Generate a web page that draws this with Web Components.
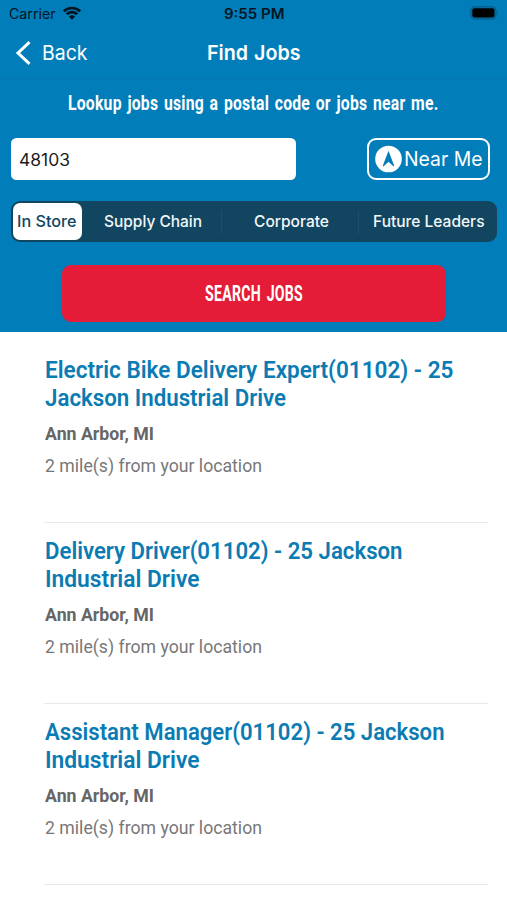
<!DOCTYPE html>
<html lang="en">
<head>
<meta charset="utf-8">
<title>Find Jobs</title>
<style>
html, body { margin: 0; background: #fff; }
body { width: 507px; height: 900px; overflow: hidden; }
</style>
</head>
<body>
<jobs-app></jobs-app>
<script>
const define = (name, html, ready) => {
  const t = document.createElement('template');
  t.innerHTML = html;
  customElements.define(name, class extends HTMLElement {
    constructor() {
      super();
      this.attachShadow({ mode: 'open' }).appendChild(t.content.cloneNode(true));
    }
    connectedCallback() { if (ready) ready.call(this); }
  });
};

/* One line of text, condensed or widened to the width given in "w". */
define('fit-line', `
<style>
:host { display: block; white-space: nowrap; flex: none; }
span { display: inline-block; transform-origin: 0 50%; }
</style><span><slot></slot></span>`, function () {
  const w = parseFloat(this.getAttribute('w'));
  this.style.width = w + 'px';
  const s = this.shadowRoot.querySelector('span');
  const natural = s.getBoundingClientRect().width;
  s.style.marginRight = (w - natural) + 'px';
  s.style.transform = 'scaleX(' + w / natural + ')';
});

define('status-bar', `
<style>
:host { display: flex; justify-content: space-between; height: 28px; padding: 0 8px 0 9px; color: #04151f; font-size: 13.8px; line-height: 28px; }
div { flex: 1; display: flex; align-items: center; }
.l { gap: 7px; } .r { justify-content: flex-end; }
b { font-weight: 600; }
svg { display: block; margin-top: -2px; }
</style>
<div class="l"><fit-line w="46.5">Carrier</fit-line>
<svg width="18" height="14" viewBox="0 0 18 14" fill="none" stroke="#04151f" stroke-width="2.7"><path d="M.9 5.3a11.6 11.6 0 0 1 16.2 0M3.8 8.3a7.5 7.5 0 0 1 10.4 0"/><path d="M9 13.7 6 10.6a4.3 4.3 0 0 1 6 0z" fill="#04151f" stroke="none"/></svg></div>
<b><fit-line w="60.5">9:55 PM</fit-line></b>
<div class="r"><svg width="29" height="14" viewBox="0 0 29 14"><rect x=".9" y=".9" width="25" height="12" rx="3.6" fill="none" stroke="#075b86" stroke-width="1.2"/><rect x="2.3" y="2.3" width="22.2" height="9.2" rx="2" fill="#000"/><path d="M27.2 4.8q1.8 2.2 0 4.4z" fill="#075b86"/></svg></div>`);

define('nav-bar', `
<style>
:host { display: grid; grid-template-columns: 1fr auto 1fr; align-items: center; box-sizing: border-box; height: 51px; padding: 0 15px .5px; border-bottom: 1px solid #0475ad; font-size: 20.4px; line-height: 26px; }
.back { display: flex; align-items: center; gap: 10px; }
svg { display: block; }
b { font-weight: 600; word-spacing: 1px; }
</style>
<div class="back"><svg width="17" height="24" viewBox="0 0 17 24" fill="none" stroke="#fff" stroke-width="3"><path d="M14.5 1.2 3 12l11.5 10.8"/></svg><fit-line w="45.5">Back</fit-line></div>
<b><fit-line w="93.5">Find Jobs</fit-line></b><i></i>`);

define('search-row', `
<style>
:host { display: flex; justify-content: space-between; height: 42px; padding: 11px 17px 0 11px; }
.field { display: flex; align-items: center; box-sizing: border-box; width: 284.5px; padding: 1px 0 0 7.8px; border-radius: 5.5px; background: #fff; color: #1c1c1e; font-size: 16.8px; line-height: 24px; }
.near { display: flex; align-items: center; gap: 2px; box-sizing: border-box; width: 123px; padding: 0 0 0 5.5px; border: 2.3px solid #fff; border-radius: 9px; font-size: 19.8px; line-height: 24px; }
svg { display: block; flex: none; }
</style>
<div class="field"><fit-line w="51">48103</fit-line></div>
<div class="near"><svg width="27" height="28" viewBox="0 0 27 28"><circle cx="13.5" cy="14" r="13.3" fill="#fff"/><path d="M13.5 5.8 7.8 20.8q.1.8.8.5l4.9-4.5 4.9 4.5q.7.3.8-.5z" fill="#017db9"/></svg><fit-line w="78.5">Near Me</fit-line></div>`);

define('job-tabs', `
<style>
:host { display: grid; grid-template-columns: 72px 139px 137px 138px; height: 41px; margin: 21px 10px 0 11px; border-radius: 9px; background: #12455f; font-size: 15.9px; font-weight: 500; line-height: 24px; overflow: hidden; }
div { display: flex; align-items: center; justify-content: center; color: #f2f7fa; padding-left: 1px; }
.on { margin: 2px 1px 2px 2px; padding: 0 1px 0 0; border-radius: 7px; background: #fff; color: #12455f; }
.sep { background: linear-gradient(#1c506b, #1c506b) right center / 1px 24px no-repeat; }
</style>
<div class="on"><fit-line w="59.5">In Store</fit-line></div>
<div class="sep"><fit-line w="98">Supply Chain</fit-line></div>
<div class="sep"><fit-line w="75">Corporate</fit-line></div>
<div><fit-line w="111.5">Future Leaders</fit-line></div>`);

define('search-button', `
<style>
:host { display: flex; align-items: center; justify-content: center; box-sizing: border-box; width: 384px; height: 56.5px; margin: 23px 0 0 62px; padding-top: 1px; border-radius: 9px; background: #e41c37; font: 700 21.5px/28px Roboto, sans-serif; letter-spacing: .4px; word-spacing: 3px; }
</style><slot></slot>`);

define('page-header', `
<style>
:host { display: block; box-sizing: border-box; height: 331.7px; background: #017db9; color: #fff; font-family: Inter, sans-serif; }
.hint { display: flex; justify-content: center; height: 48px; font: 700 20.5px/48px Roboto, sans-serif; letter-spacing: .3px; word-spacing: 2px; }
</style>
<status-bar></status-bar><nav-bar></nav-bar>
<div class="hint"><fit-line w="370.5">Lookup jobs using a postal code or jobs near me.</fit-line></div>
<search-row></search-row><job-tabs></job-tabs>
<search-button><fit-line w="98">SEARCH JOBS</fit-line></search-button>`);

define('job-card', `
<style>
:host { display: block; box-sizing: border-box; height: 180.9px; margin: 0 19px 0 44px; padding-top: 15.2px; border-bottom: 1.3px solid #e9e9e9; font-family: Roboto, sans-serif; }
h2 { margin: 0 0 9px .6px; font-size: 23px; line-height: 28px; font-weight: 600; color: #0b7bb3; }
.place { margin-left: .7px; font-size: 18px; line-height: 24px; font-weight: 700; color: #666; }
.dist { margin: 8.2px 0 0 .7px; font-size: 18.5px; line-height: 24px; color: #777; }
</style>
<h2><slot></slot></h2>
<div class="place"><fit-line w="109">Ann Arbor, MI</fit-line></div>
<div class="dist"><fit-line w="217">2 mile(s) from your location</fit-line></div>`);

define('jobs-app', `
<style>:host { display: block; } main { padding-top: 10.3px; }</style>
<page-header></page-header>
<main>
<job-card><fit-line w="408.5">Electric Bike Delivery Expert(01102) - 25</fit-line><fit-line w="241">Jackson Industrial Drive</fit-line></job-card>
<job-card><fit-line w="357.5">Delivery Driver(01102) - 25 Jackson</fit-line><fit-line w="154.5">Industrial Drive</fit-line></job-card>
<job-card><fit-line w="399.5">Assistant Manager(01102) - 25 Jackson</fit-line><fit-line w="154.5">Industrial Drive</fit-line></job-card>
</main>`);
</script>
</body>
</html>
